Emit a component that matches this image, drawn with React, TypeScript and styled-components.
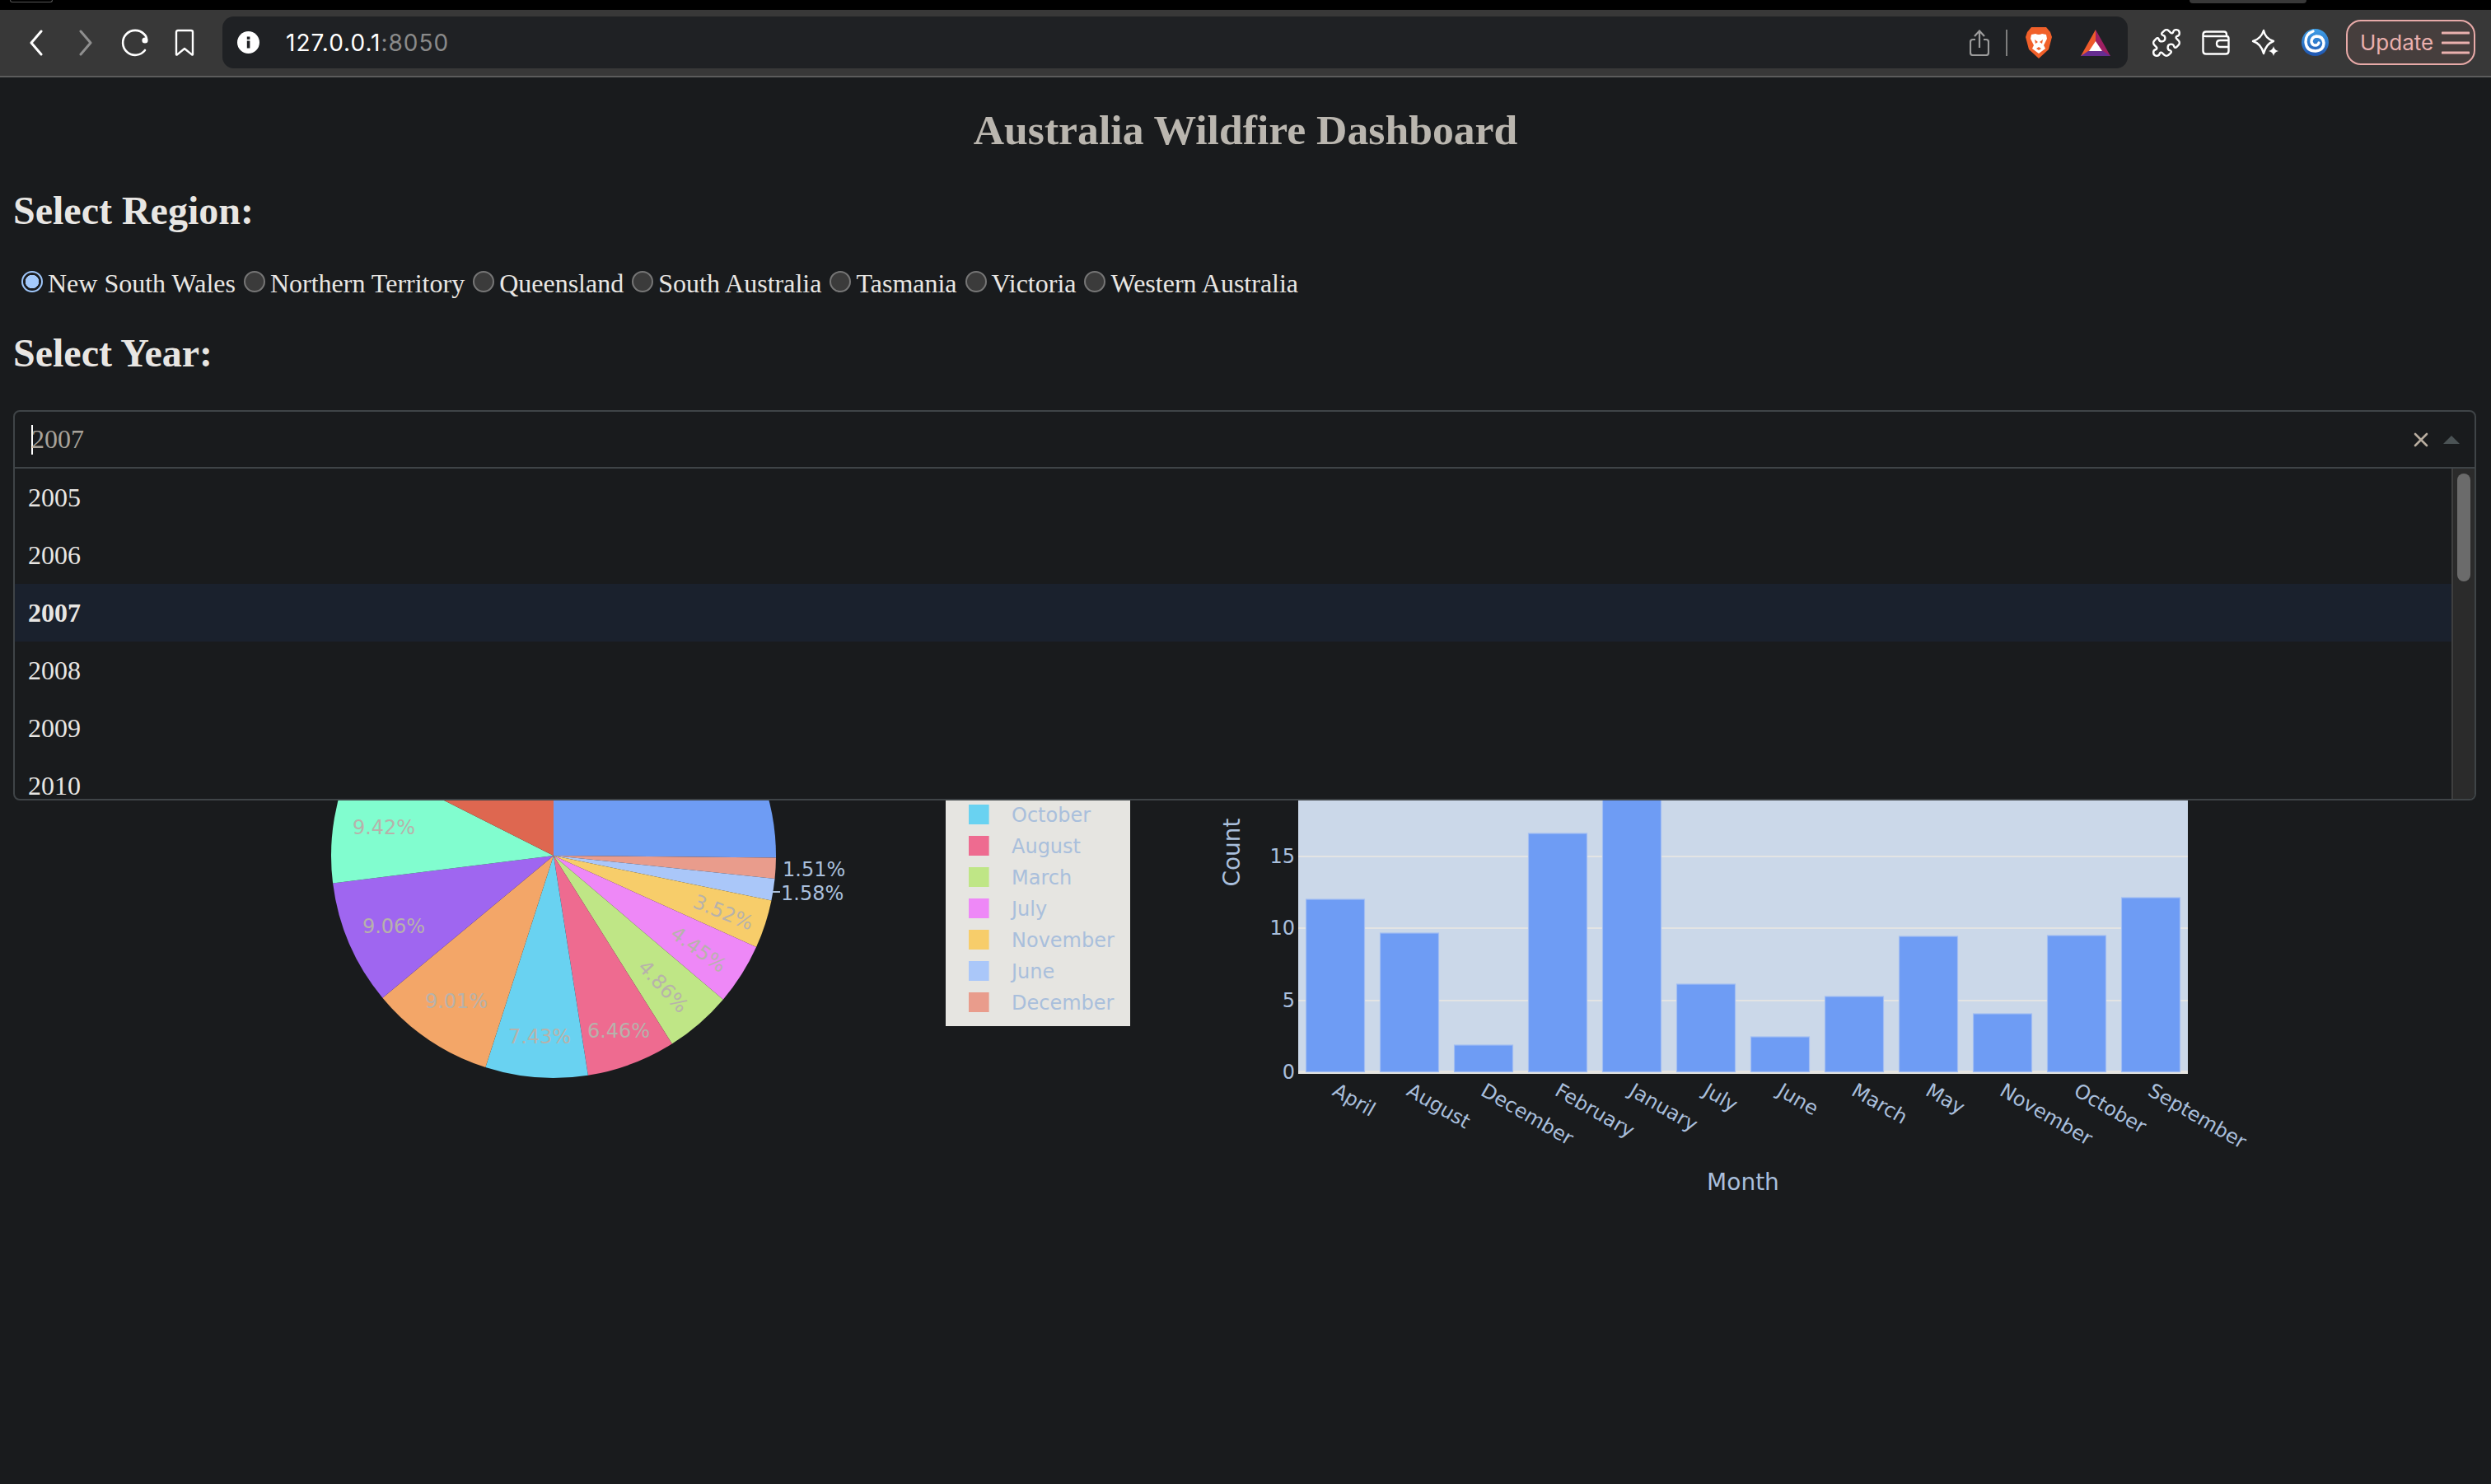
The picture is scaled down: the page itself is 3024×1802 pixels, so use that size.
import styled, { createGlobalStyle } from "styled-components";
import { Puzzle } from "lucide-react";

const GlobalStyle = createGlobalStyle`
  html, body {
    margin: 0;
    padding: 0;
    background: #191b1d;
  }
  * {
    box-sizing: border-box;
  }
`;

const regions = [
  "New South Wales",
  "Northern Territory",
  "Queensland",
  "South Australia",
  "Tasmania",
  "Victoria",
  "Western Australia",
];

const years = ["2005", "2006", "2007", "2008", "2009", "2010"];

// clockwise from 12 o'clock
const slices = [
  { month: "January", pct: 25.14, color: "#6e9cf4" },
  { month: "December", pct: 1.51, color: "#e99c8c" },
  { month: "June", pct: 1.58, color: "#aac7f9" },
  { month: "November", pct: 3.52, color: "#f7cd6a" },
  { month: "July", pct: 4.45, color: "#ee88f7" },
  { month: "March", pct: 4.86, color: "#bfe686" },
  { month: "August", pct: 6.46, color: "#ee6b90" },
  { month: "October", pct: 7.43, color: "#69d2f1" },
  { month: "May", pct: 9.01, color: "#f3a668" },
  { month: "April", pct: 9.06, color: "#9f66f0" },
  { month: "September", pct: 9.42, color: "#81fdcf" },
  { month: "February", pct: 17.56, color: "#de6750" },
];

const legendOrder = [
  "January",
  "February",
  "September",
  "April",
  "May",
  "October",
  "August",
  "March",
  "July",
  "November",
  "June",
  "December",
];

const pieLabels = [
  { text: "9.42%", x: 466, y: 1005, angle: 0 },
  { text: "9.06%", x: 478, y: 1125, angle: 0 },
  { text: "9.01%", x: 554, y: 1216, angle: 0 },
  { text: "7.43%", x: 655, y: 1259, angle: 0 },
  { text: "6.46%", x: 751, y: 1252, angle: 0 },
  { text: "4.86%", x: 805, y: 1198, angle: 47 },
  { text: "4.45%", x: 848, y: 1153, angle: 36 },
  { text: "3.52%", x: 878, y: 1108, angle: 22 },
];

const bars = [
  { month: "April", top: 1092 },
  { month: "August", top: 1133 },
  { month: "December", top: 1269 },
  { month: "February", top: 1012 },
  { month: "January", top: 788 },
  { month: "July", top: 1195 },
  { month: "June", top: 1259 },
  { month: "March", top: 1210 },
  { month: "May", top: 1137 },
  { month: "November", top: 1231 },
  { month: "October", top: 1136 },
  { month: "September", top: 1090 },
];

const yTicks = [
  { label: "15", y: 1040 },
  { label: "10", y: 1127 },
  { label: "5", y: 1215 },
];

const PIE_X = 672;
const PIE_Y = 1039;
const PIE_R = 270;

const Page = styled.div`
  min-height: 1802px;
  width: 3024px;
  overflow: hidden;
  background: #191b1d;
  font-family: "Liberation Serif", "Times New Roman", serif;
  color: #e8e6e3;
`;

const TopStrip = styled.div`
  display: flex;
  height: 12px;
  background: #000;
`;

const FirstTab = styled.div`
  width: 52px;
  height: 3px;
  margin-left: 12px;
  border: 1px solid #555;
  border-top: 0;
  border-radius: 0 0 6px 6px;
`;

const LastTab = styled.div`
  width: 142px;
  height: 4px;
  margin-left: auto;
  margin-right: 224px;
  background: #383838;
  border-radius: 0 0 8px 8px;
`;

const Toolbar = styled.div`
  display: flex;
  align-items: center;
  height: 82px;
  padding: 0 19px 1px 14px;
  background: #383838;
  border-bottom: 2px solid #5c5c5c;
`;

const ToolSlot = styled.div`
  display: flex;
  align-items: center;
  justify-content: center;
  width: 60px;
  height: 60px;
  flex: none;
`;

const Omnibox = styled.div`
  display: flex;
  align-items: center;
  flex: none;
  width: 2313px;
  height: 63px;
  margin: 0 17px 0 16px;
  padding: 0 21px 0 18px;
  background: #1f2124;
  border-radius: 14px;
`;

const UrlText = styled.span`
  margin: 1px 0 0 32px;
  font-family: Inter, "Liberation Sans", sans-serif;
  font-size: 28px;
  letter-spacing: 1px;
  color: #fff;
`;

const UrlPort = styled.span`
  color: #8a8a8a;
`;

const OmniActions = styled.div`
  display: flex;
  align-items: center;
  margin-left: auto;
`;

const OmniDivider = styled.div`
  width: 2px;
  height: 32px;
  margin: 0 22px 0 20px;
  background: #7d7d7d;
`;

const UpdateButton = styled.div`
  display: flex;
  align-items: center;
  flex: none;
  width: 157px;
  height: 55px;
  margin-left: 8px;
  padding-left: 15px;
  gap: 10px;
  font-family: Inter, "Liberation Sans", sans-serif;
  font-size: 26px;
  color: #eab0ae;
  background: #463e3d;
  border: 2px solid #e8aaa8;
  border-radius: 18px;
`;

const Title = styled.h1`
  margin: 34px 0 0;
  font-size: 51.7px;
  line-height: 60px;
  font-weight: 700;
  text-align: center;
  color: #bab6af;
`;

const SectionHeading = styled.h2<{ $top: number }>`
  margin: ${(p) => p.$top}px 0 0 16px;
  font-size: 48px;
  line-height: 55px;
  font-weight: 700;
`;

const RadioRow = styled.div`
  display: flex;
  margin: 43px 0 0 16px;
  font-size: 32px;
  line-height: 37px;
`;

const RadioLabel = styled.label`
  display: flex;
  align-items: flex-start;
`;

const RadioInput = styled.input`
  appearance: none;
  width: 26px;
  height: 26px;
  margin: 3px 6px 0 10px;
  border-radius: 50%;
  border: 2px solid #767676;
  background: #3b3b3b;

  &:checked {
    border-color: #9fc7fb;
    background: radial-gradient(circle, #a3c9fb 0 8px, #1b1d20 8.5px);
  }
`;

const Dropdown = styled.div`
  position: relative;
  z-index: 2;
  width: 2990px;
  margin: 42px 0 0 16px;
  font-size: 32px;
`;

const Control = styled.div`
  display: flex;
  align-items: center;
  height: 71px;
  padding: 0 18px 0 20px;
  background: #191b1d;
  border: 2px solid #3f4447;
  border-radius: 8px 8px 0 0;
`;

const Caret = styled.span`
  width: 2px;
  height: 36px;
  margin-right: -2px;
  background: #fff;
`;

const SelectedYear = styled.span`
  color: #a8a39b;
`;

const ClearIcon = styled.svg`
  width: 18px;
  height: 18px;
  margin-left: auto;
`;

const OpenArrow = styled.span`
  width: 0;
  height: 0;
  margin-left: 18px;
  border-left: 10px solid transparent;
  border-right: 10px solid transparent;
  border-bottom: 10px solid #4b5355;
`;

const Menu = styled.div`
  position: absolute;
  top: 100%;
  left: 0;
  right: 0;
  display: flex;
  height: 404px;
  margin-top: -1px;
  background: #191b1d;
  border: 2px solid #3f4447;
  border-top-width: 1px;
  border-radius: 0 0 8px 8px;
  overflow: hidden;
`;

const OptionList = styled.div`
  flex: 1;
  overflow: hidden;
`;

const Option = styled.div<{ $selected?: boolean }>`
  height: 70px;
  padding-left: 16px;
  line-height: 70px;
  font-weight: ${(p) => (p.$selected ? 700 : 400)};
  background: ${(p) => (p.$selected ? "#1a212d" : "transparent")};
`;

const ScrollTrack = styled.div`
  flex: none;
  width: 28px;
  padding: 6px 5px 0 5px;
  background: #2b2b2b;
  border-left: 2px solid #3f3f3f;
`;

const ScrollThumb = styled.div`
  height: 131px;
  background: #6b6b6b;
  border-radius: 8px;
`;

const ChartRow = styled.div`
  display: flex;
  margin-left: 16px;
`;

const Figure = styled.svg`
  display: block;
  flex: none;
  width: 1400px;
  height: 894px;
  font-family: "DejaVu Sans", Verdana, sans-serif;
`;

const ChartText = styled.text<{ $size?: number; $fill?: string }>`
  font-size: ${(p) => p.$size ?? 24}px;
  fill: ${(p) => p.$fill ?? "#a9bfdc"};
`;

function slicePath(startPct: number, pct: number) {
  const a0 = (startPct / 100) * Math.PI * 2;
  const a1 = ((startPct + pct) / 100) * Math.PI * 2;
  const x0 = PIE_X + PIE_R * Math.sin(a0);
  const y0 = PIE_Y - PIE_R * Math.cos(a0);
  const x1 = PIE_X + PIE_R * Math.sin(a1);
  const y1 = PIE_Y - PIE_R * Math.cos(a1);
  const large = pct > 50 ? 1 : 0;
  return `M${PIE_X} ${PIE_Y} L${x0} ${y0} A${PIE_R} ${PIE_R} 0 ${large} 1 ${x1} ${y1} Z`;
}

function PieChart() {
  let start = 0;
  return (
    <Figure viewBox="16 569 1400 894">
      {slices.map((s) => {
        const d = slicePath(start, s.pct);
        start += s.pct;
        return <path key={s.month} d={d} fill={s.color} />;
      })}
      {pieLabels.map((l) => (
        <ChartText
          key={l.text}
          x={l.x}
          y={l.y}
          $fill="#b7b2ab"
          textAnchor="middle"
          dominantBaseline="central"
          transform={`rotate(${l.angle} ${l.x} ${l.y})`}
        >
          {l.text}
        </ChartText>
      ))}
      <ChartText x={950} y={1064}>1.51%</ChartText>
      <ChartText x={948} y={1093}>1.58%</ChartText>
      <line x1={938} y1={1083} x2={947} y2={1083} stroke="#a9bfdc" strokeWidth={2} />
      <rect x={1148} y={770} width={224} height={476} fill="#e6e5e1" />
      {legendOrder.map((month, i) => {
        const y = 799 + i * 38;
        const color = slices.find((s) => s.month === month)?.color;
        return (
          <g key={month}>
            <rect x={1176} y={y - 12} width={24.6} height={24} fill={color} />
            <ChartText x={1228} y={y + 1} dominantBaseline="central">
              {month}
            </ChartText>
          </g>
        );
      })}
    </Figure>
  );
}

function BarChart() {
  return (
    <Figure viewBox="1416 569 1400 894">
      <rect x={1576} y={763} width={1080} height={540} fill="#cbd8e9" />
      {yTicks.map((t) => (
        <rect key={t.label} x={1576} y={t.y - 1} width={1080} height={2} fill="#e3e4e4" />
      ))}
      <rect x={1576} y={1300} width={1080} height={4} fill="#e6e5e1" />
      {bars.map((b, i) => {
        const cx = 1621 + i * 90;
        return (
          <g key={b.month}>
            <rect
              x={cx - 35.5}
              y={b.top}
              width={71}
              height={1301.5 - b.top}
              fill="#6e9cf4"
              stroke="#a3bef2"
              strokeWidth={1.2}
            />
            <ChartText x={cx - 5} y={1329} transform={`rotate(30 ${cx - 5} 1329)`}>
              {b.month}
            </ChartText>
          </g>
        );
      })}
      {yTicks.map((t) => (
        <ChartText key={t.label} x={1572} y={t.y} textAnchor="end" dominantBaseline="central">
          {t.label}
        </ChartText>
      ))}
      <ChartText x={1572} y={1302} textAnchor="end" dominantBaseline="central">
        0
      </ChartText>
      <ChartText
        x={1495}
        y={1035}
        $size={28}
        textAnchor="middle"
        dominantBaseline="central"
        transform="rotate(-90 1495 1035)"
      >
        Count
      </ChartText>
      <ChartText x={2116} y={1435} $size={28} textAnchor="middle" dominantBaseline="central">
        Month
      </ChartText>
    </Figure>
  );
}

function BackIcon({ color }: { color: string }) {
  return (
    <svg width="18" height="32" viewBox="0 0 18 32">
      <path d="M15 2 L3 16 L15 30" fill="none" stroke={color} strokeWidth="3" strokeLinecap="round" strokeLinejoin="round" />
    </svg>
  );
}

function ForwardIcon({ color }: { color: string }) {
  return (
    <svg width="18" height="32" viewBox="0 0 18 32">
      <path d="M3 2 L15 16 L3 30" fill="none" stroke={color} strokeWidth="3" strokeLinecap="round" strokeLinejoin="round" />
    </svg>
  );
}

function ReloadIcon() {
  return (
    <svg width="36" height="34" viewBox="0 0 36 34">
      <path d="M29 6.5 A15 15 0 1 0 30 26" fill="none" stroke="#fff" strokeWidth="2.6" strokeLinecap="round" />
      <circle cx="30" cy="14" r="3.6" fill="#fff" />
      <path d="M29 6.5 Q32 9 32 13" fill="none" stroke="#fff" strokeWidth="2.6" />
    </svg>
  );
}

function BookmarkIcon() {
  return (
    <svg width="26" height="34" viewBox="0 0 26 34">
      <path
        d="M3 4 Q3 2 5 2 H21 Q23 2 23 4 V31 Q23 32 22 31.4 L13 24 L4 31.4 Q3 32 3 31 Z"
        fill="none"
        stroke="#fff"
        strokeWidth="2.4"
        strokeLinejoin="round"
      />
    </svg>
  );
}

function InfoIcon() {
  return (
    <svg width="27" height="27" viewBox="0 0 27 27">
      <circle cx="13.5" cy="13.5" r="13.5" fill="#fff" />
      <rect x="11.8" y="11.5" width="3.6" height="9" fill="#1f2124" />
      <rect x="11.8" y="6.5" width="3.6" height="3.4" fill="#1f2124" />
    </svg>
  );
}

function ShareIcon() {
  return (
    <svg width="24" height="32" viewBox="0 0 24 32">
      <path
        d="M7 12 H4 Q1 12 1 15 V28 Q1 31 4 31 H20 Q23 31 23 28 V15 Q23 12 20 12 H17"
        fill="none"
        stroke="#9c9c9c"
        strokeWidth="2.2"
      />
      <path d="M12 22 V2 M6 8 L12 1.5 L18 8" fill="none" stroke="#9c9c9c" strokeWidth="2.2" />
    </svg>
  );
}

function BraveIcon() {
  return (
    <svg width="32" height="38" viewBox="0 0 32 38" style={{ marginRight: 35 }}>
      <path d="M7 0 H25 L30 6 L32 12 L28 27 L16 38 L4 27 L0 12 L2 6 Z" fill="#f1602a" />
      <path
        d="M7 9 L12 8 Q16 10 20 8 L25 9 L26 14 L22 22 L24 26 L16 32 L8 26 L10 22 L6 14 Z"
        fill="#fff"
      />
      <path d="M11 15 L15 18 L12 20 Z M21 15 L17 18 L20 20 Z M13 26 L16 24 L19 26 L16 28 Z" fill="#f1602a" />
    </svg>
  );
}

function BatIcon() {
  return (
    <svg width="36" height="32" viewBox="0 0 36 32">
      <path d="M18 0 L36 32 H27 L18 16 Z" fill="#9e1f63" />
      <path d="M18 0 L0 32 H9 L18 16 Z" fill="#ee5a2b" />
      <path d="M0 32 L9 26 H27 L36 32 Z" fill="#662d91" />
      <path d="M18 14 L26 26 H10 Z" fill="#fff" />
    </svg>
  );
}

function WalletIcon() {
  return (
    <svg width="34" height="30" viewBox="0 0 34 30">
      <path
        d="M5 1.5 H27 Q30 1.5 30 5 V7 M30 7 Q32.5 7 32.5 10 V25 Q32.5 28.5 29 28.5 H5 Q1.5 28.5 1.5 25 V5 Q1.5 1.5 5 1.5 M1.5 6 Q2 7 5 7 H30"
        fill="none"
        stroke="#fff"
        strokeWidth="2.4"
      />
      <path d="M32.5 12 H22 Q18 12 18 16 Q18 20 22 20 H32.5" fill="none" stroke="#fff" strokeWidth="2.4" />
    </svg>
  );
}

function SparkleIcon() {
  return (
    <svg width="34" height="34" viewBox="0 0 34 34">
      <path
        d="M15 2 Q17 12 27 15 Q18 18 15 30 Q12 18 2 15 Q12 12 15 2 Z"
        fill="none"
        stroke="#fff"
        strokeWidth="2.4"
        strokeLinejoin="round"
      />
      <path d="M27 21 Q28 26 33 27 Q28 28 27 33 Q26 28 21 27 Q26 26 27 21 Z" fill="#fff" />
    </svg>
  );
}

function SwirlIcon() {
  return (
    <svg width="33" height="33" viewBox="0 0 33 33">
      <defs>
        <linearGradient id="swirl" x1="0" y1="0" x2="0" y2="1">
          <stop offset="0" stopColor="#3fa0e8" />
          <stop offset="1" stopColor="#1f55b0" />
        </linearGradient>
      </defs>
      <circle cx="16.5" cy="16.5" r="16.5" fill="url(#swirl)" />
      <path
        d="M14 3 Q5 6 5 16 Q6 27 17 27 Q27 26 27 17 Q26 9 18 9 Q12 10 12 16 Q13 20 17 20 Q20 20 21 17"
        fill="none"
        stroke="#fff"
        strokeWidth="3.4"
        strokeLinecap="round"
      />
    </svg>
  );
}

function MenuLines() {
  return (
    <svg width="34" height="28" viewBox="0 0 34 28">
      <path d="M1 2 H33 M1 14 H33 M1 26 H33" stroke="#eab0ae" strokeWidth="3" strokeLinecap="round" />
    </svg>
  );
}

export default function App() {
  return (
    <Page>
      <GlobalStyle />
      <TopStrip>
        <FirstTab />
        <LastTab />
      </TopStrip>
      <Toolbar>
        <ToolSlot>
          <BackIcon color="#fff" />
        </ToolSlot>
        <ToolSlot>
          <ForwardIcon color="#8f8f8f" />
        </ToolSlot>
        <ToolSlot>
          <ReloadIcon />
        </ToolSlot>
        <ToolSlot>
          <BookmarkIcon />
        </ToolSlot>
        <Omnibox>
          <InfoIcon />
          <UrlText>
            127.0.0.1<UrlPort>:8050</UrlPort>
          </UrlText>
          <OmniActions>
            <ShareIcon />
            <OmniDivider />
            <BraveIcon />
            <BatIcon />
          </OmniActions>
        </Omnibox>
        <ToolSlot>
          <Puzzle size={38} color="#fff" strokeWidth={1.5} />
        </ToolSlot>
        <ToolSlot>
          <WalletIcon />
        </ToolSlot>
        <ToolSlot>
          <SparkleIcon />
        </ToolSlot>
        <ToolSlot>
          <SwirlIcon />
        </ToolSlot>
        <UpdateButton>
          Update
          <MenuLines />
        </UpdateButton>
      </Toolbar>

      <Title>Australia Wildfire Dashboard</Title>
      <SectionHeading $top={40}>Select Region:</SectionHeading>
      <RadioRow>
        {regions.map((region, i) => (
          <RadioLabel key={region}>
            <RadioInput type="radio" name="region" defaultChecked={i === 0} />
            {region}
          </RadioLabel>
        ))}
      </RadioRow>
      <SectionHeading $top={38}>Select Year:</SectionHeading>

      <Dropdown>
        <Control>
          <Caret />
          <SelectedYear>2007</SelectedYear>
          <ClearIcon viewBox="0 0 18 18">
            <path d="M2 2 L16 16 M16 2 L2 16" stroke="#b8ad9f" strokeWidth="2.6" strokeLinecap="round" />
          </ClearIcon>
          <OpenArrow />
        </Control>
        <Menu>
          <OptionList>
            {years.map((year) => (
              <Option key={year} $selected={year === "2007"}>
                {year}
              </Option>
            ))}
          </OptionList>
          <ScrollTrack>
            <ScrollThumb />
          </ScrollTrack>
        </Menu>
      </Dropdown>

      <ChartRow>
        <PieChart />
        <BarChart />
      </ChartRow>
    </Page>
  );
}
